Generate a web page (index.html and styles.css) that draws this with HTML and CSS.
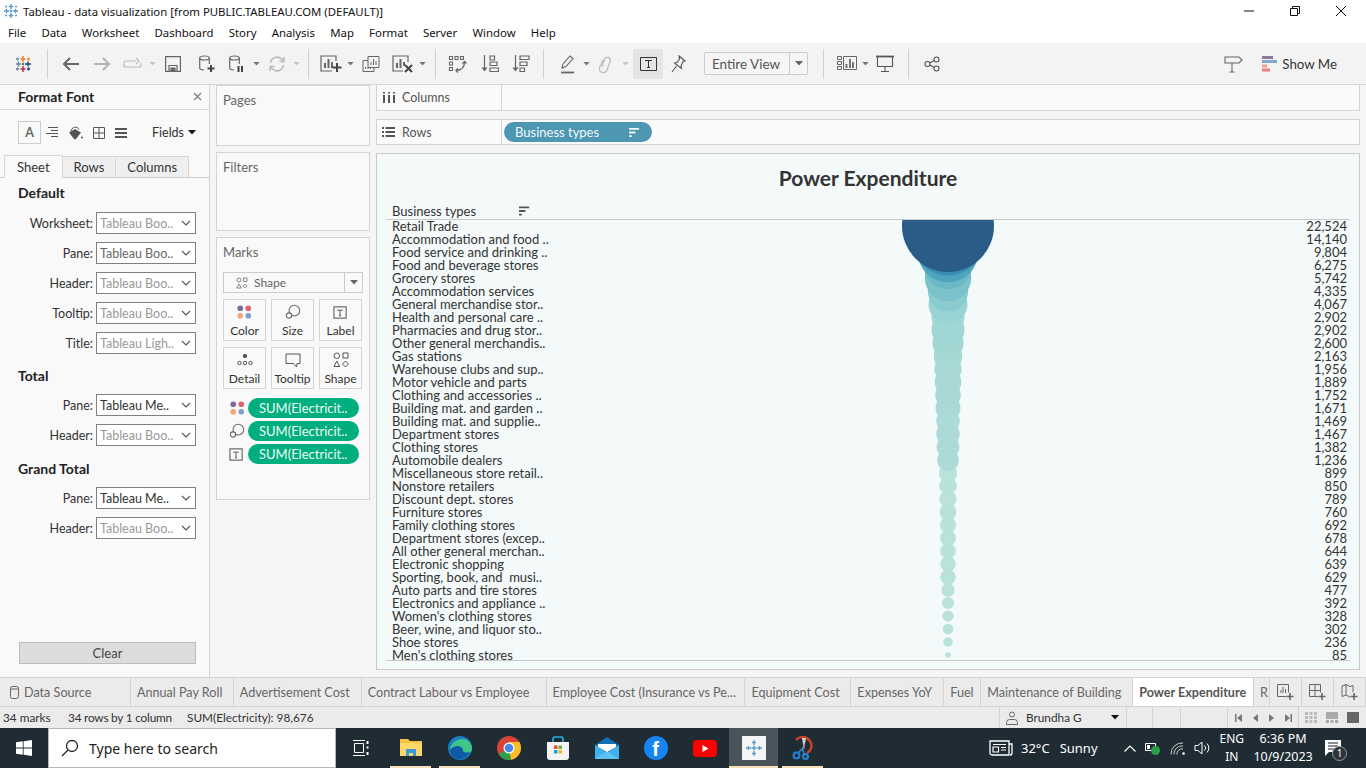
FILE: index.html
```html
<!DOCTYPE html>
<html lang="en">
<head>
  <meta charset="UTF-8">
  <title>Tableau - data visualization</title>
  <link rel="stylesheet" href="styles.css">
</head>
<body>
  <svg class="defs" width="0" height="0">
    <symbol id="palette" viewBox="0 0 18 16">
      <circle cx="4.5" cy="4" r="3" fill="#7b6a96"/><circle cx="13" cy="4" r="3" fill="#e0636f"/>
      <circle cx="4.5" cy="12" r="3" fill="#f2a478"/><circle cx="13" cy="12" r="3" fill="#7d9fcb"/>
    </symbol>
    <symbol id="size" viewBox="0 0 18 18">
      <circle cx="10.5" cy="7.5" r="6" fill="none" stroke="#666" stroke-width="1.2"/>
      <circle cx="4.5" cy="13" r="3" fill="#f9f9f9" stroke="#666" stroke-width="1.2"/>
    </symbol>
    <symbol id="textbox" viewBox="0 0 16 16">
      <rect x="1" y="2" width="13" height="12" fill="none" stroke="#555" stroke-width="1.1"/>
      <path d="M4.5 5.5h6M7.5 5.5v6M6.3 11.5h2.4" fill="none" stroke="#555"/>
    </symbol>
    <symbol id="caret" viewBox="0 0 8 5"><path d="M0 0h8L4 4.5z"/></symbol>
    <symbol id="chev" viewBox="0 0 10 6"><path d="M1 1l4 4 4-4" fill="none" stroke="#555" stroke-width="1.1"/></symbol>
    <symbol id="sortbars" viewBox="0 0 12 10"><path d="M0 0h11v2H0zM0 4h7v2H0zM0 8h3v2H0z"/></symbol>
  </svg>

  <header class="titlebar">
    <svg class="app-icon" width="16" height="16" viewBox="0 0 16 16" stroke="#5c9bc5" stroke-width="1.3">
      <path d="M8 1v5M5.800 3.500h4.400M8 10v5M5.800 12.500h4.400M1 8h5M3.500 5.800v4.400M10 8h5M12.500 5.800v4.400M6.600 8h2.800M8 6.600v2.800"/>
      <path d="M3 2.500v2M2 3.500h2M13 2.500v2M12 3.500h2M3 11.500v2M2 12.500h2M13 11.500v2M12 12.500h2" stroke-width="1"/>
    </svg>
    <span class="title-text">Tableau - data visualization [from PUBLIC.TABLEAU.COM (DEFAULT)]</span>
    <div class="win-controls">
      <svg width="12" height="12" viewBox="0 0 12 12"><path d="M1 6h10" stroke="#111"/></svg>
      <svg width="12" height="12" viewBox="0 0 12 12" fill="none" stroke="#111"><path d="M1.500 3.500h7v7h-7zM3.500 3.500v-2h7v7h-2"/></svg>
      <svg width="12" height="12" viewBox="0 0 12 12"><path d="M1 1l10 10M11 1L1 11" stroke="#111"/></svg>
    </div>
  </header>

  <nav class="menubar">
    <span>File</span><span>Data</span><span>Worksheet</span><span>Dashboard</span><span>Story</span><span>Analysis</span><span>Map</span><span>Format</span><span>Server</span><span>Window</span><span>Help</span>
  </nav>

  <div class="toolbar">
    <span class="t m-logo">
      <svg width="20" height="20" viewBox="0 0 20 20" fill="none" stroke-width="1.4">
        <path d="M10 2v6M7.500 5h5" stroke="#e8762b"/><path d="M10 12v6M7.500 15h5" stroke="#c72037"/>
        <path d="M3 10h5M5.500 7.500v5" stroke="#5b879b"/><path d="M12 10h6M15 7.500v5" stroke="#1f447b"/>
        <path d="M4.500 3.500v3M3 5h3" stroke="#7099a6"/><path d="M15.500 3.500v3M14 5h3" stroke="#eb912b"/>
        <path d="M4.500 13.500v3M3 15h3" stroke="#59879b"/><path d="M15.500 13.500v3M14 15h3" stroke="#1f447b"/>
        <path d="M10 8.800v2.400M8.800 10h2.400" stroke="#666"/>
      </svg>
    </span>
    <i class="sep sep-a"></i>
    <span class="t"><svg width="18" height="16" viewBox="0 0 18 16" fill="none" stroke="#666" stroke-width="2"><path d="M17 8H2M8 2L2 8l6 6"/></svg></span>
    <span class="t"><svg width="18" height="16" viewBox="0 0 18 16" fill="none" stroke="#b5b5b5" stroke-width="2"><path d="M1 8h15M10 2l6 6-6 6"/></svg></span>
    <span class="t"><svg width="20" height="14" viewBox="0 0 20 14" fill="none" stroke="#bbb" stroke-width="1.2"><path d="M13 4H3a2 2 0 0 0-2 2v2a2 2 0 0 0 2 2h13a2 2 0 0 0 2-2V6M13 1l3 3-3 3"/></svg></span>
    <span class="c"><svg width="7" height="4"><use href="#caret" class="dim"/></svg></span>
    <span class="t"><svg width="16" height="16" viewBox="0 0 16 16" fill="none" stroke="#666" stroke-width="1.2"><path d="M.6.6h14.800v14.800H.6z"/><path d="M4 15V9.500h8V15"/><path d="M6 12h4v3H6z" fill="#666"/></svg></span>
    <span class="t m3"><svg width="18" height="18" viewBox="0 0 18 18" fill="none" stroke="#666" stroke-width="1.2"><ellipse cx="6.500" cy="3" rx="4.800" ry="2"/><path d="M1.700 3v10c0 1 1.700 1.800 4.300 2M11.300 3v6"/><path d="M13 10v7M9.500 13.500h7" stroke="#444" stroke-width="2"/></svg></span>
    <span class="t"><svg width="18" height="18" viewBox="0 0 18 18" fill="none" stroke="#666" stroke-width="1.2"><ellipse cx="6.500" cy="3" rx="4.800" ry="2"/><path d="M1.700 3v10c0 1 1.700 1.800 4.300 2M11.300 3v6"/><path d="M10.500 11v6M14 11v6" stroke="#444" stroke-width="2"/></svg></span>
    <span class="c"><svg width="7" height="4"><use href="#caret"/></svg></span>
    <span class="t"><svg width="18" height="18" viewBox="0 0 18 18" fill="none" stroke="#bbb" stroke-width="1.6"><path d="M2.500 8a6.500 6.500 0 0 1 11-4l2 2M15.500 10a6.500 6.500 0 0 1-11 4l-2-2M15.800 2v4.500h-4.500M2.200 16v-4.500h4.500"/></svg></span>
    <span class="c"><svg width="7" height="4"><use href="#caret" class="dim"/></svg></span>
    <i class="sep sep-e"></i>
    <span class="t"><svg width="22" height="18" viewBox="0 0 22 18" fill="none" stroke="#666" stroke-width="1.2"><path d="M16 6V1H1v15h11"/><path d="M5 13V8M8.500 13V4M12 13V7" stroke-width="2"/><path d="M17 8v9M12.500 12.500h9" stroke="#444" stroke-width="2"/></svg></span>
    <span class="c"><svg width="7" height="4"><use href="#caret"/></svg></span>
    <span class="t"><svg width="18" height="18" viewBox="0 0 18 18" fill="none" stroke="#666"><path d="M6 1.500h11v11H6z"/><path d="M9 10V7M11.500 10V4M14 10V6"/><path d="M6 5.500H1v11h11v-4"/><path d="M3.500 14v-2M6 14v-2M8.500 14v-2"/></svg></span>
    <span class="t m2"><svg width="22" height="18" viewBox="0 0 22 18" fill="none" stroke="#666" stroke-width="1.2"><path d="M16 7V1H1v15h10"/><path d="M5 13V8M8.500 13V4M12 11V7" stroke-width="2"/><path d="M13 10l7 7M20 10l-7 7" stroke="#444" stroke-width="2"/></svg></span>
    <span class="c"><svg width="7" height="4"><use href="#caret"/></svg></span>
    <i class="sep"></i>
    <span class="t"><svg width="20" height="20" viewBox="0 0 20 20" fill="none" stroke="#666" stroke-width="1.1"><path d="M1.500 2.500h3v3h-3zM7 2.500h3v3H7zM12.500 2.500h3v3h-3zM1.500 8h3v3h-3zM1.500 13.500h3v3h-3z"/><path d="M16.500 8c0 5-3 8-8 8.500M14.500 9.500l2-2 2 2M10 14.500l-2 2 2 2" stroke-width="1.300"/></svg></span>
    <span class="t m2"><svg width="18" height="20" viewBox="0 0 18 20" fill="none" stroke="#666" stroke-width="1.2"><path d="M3.500 1v15"/><path d="M.5 13.500h6l-3 4z" fill="#666" stroke="none"/><path d="M9 2h4.500v4H9zM9 8h7v3.500H9zM9 14h8.500v3.500H9z"/></svg></span>
    <span class="t"><svg width="18" height="20" viewBox="0 0 18 20" fill="none" stroke="#666" stroke-width="1.2"><path d="M3.500 1v15"/><path d="M.5 13.500h6l-3 4z" fill="#666" stroke="none"/><path d="M8 2h9v3.500H8zM8 8h7v3.500H8zM8 14h4.500v3.500H8z"/></svg></span>
    <i class="sep sep-b"></i>
    <span class="t"><svg width="16" height="20" viewBox="0 0 16 20" fill="none" stroke="#666" stroke-width="1.1"><path d="M2 14l1-4 7-8 3 2.500-7 8z"/><path d="M1 18.500h13" stroke-width="1.800"/></svg></span>
    <span class="c cn"><svg width="7" height="4"><use href="#caret"/></svg></span>
    <span class="t"><svg width="14" height="20" viewBox="0 0 14 20" fill="none" stroke="#bbb" stroke-width="1.2"><path d="M4 14V6a3 3 0 0 1 6 0v9a4 4 0 0 1-8 .500L3 7" transform="rotate(20 7 10)"/></svg></span>
    <span class="c"><svg width="7" height="4"><use href="#caret" class="dim"/></svg></span>
    <span class="t-on"><svg width="17" height="14" viewBox="0 0 17 14" fill="none" stroke="#333"><path d="M.5.500h16v13H.5z"/><path d="M5 3.500h7M8.500 3.500v7M7 10.500h3"/></svg></span>
    <span class="t t-pin"><svg width="15" height="18" viewBox="0 0 15 18" fill="none" stroke="#555" stroke-width="1.1"><path d="M8 1l6 5-2 .500-2 4.500.500 2.500L3.500 8 6 7.500l2.500-3.500z"/><path d="M5.500 11L1 17"/></svg></span>
    <div class="view-select"><span class="view-label">Entire View</span><span class="view-arrow"><svg width="8" height="5"><use href="#caret" class="mid"/></svg></span></div>
    <i class="sep sep-c"></i>
    <span class="t"><svg width="20" height="15" viewBox="0 0 20 15" fill="none" stroke="#666"><path d="M.5.500h4v3h-4zM.5 5.500h4v3h-4zM.5 10.500h4v3h-4zM6.500.500h13v13h-13z"/><path d="M9.500 12V8M13 12V3M16 12V6" stroke-width="1.800"/></svg></span>
    <span class="c cn"><svg width="7" height="4"><use href="#caret"/></svg></span>
    <span class="t"><svg width="18" height="18" viewBox="0 0 18 18" fill="none" stroke="#555" stroke-width="1.1"><path d="M0 1.500h18" stroke-width="1.800"/><path d="M1.500 2v9.500h15V2M9 11.500V16M5 16.500h8"/></svg></span>
    <i class="sep sep-d"></i>
    <span class="t"><svg width="16" height="16" viewBox="0 0 16 16" fill="none" stroke="#555" stroke-width="1.1"><circle cx="3.500" cy="8" r="2.500"/><circle cx="12.500" cy="3.500" r="2.500"/><circle cx="12.500" cy="12.500" r="2.500"/><path d="M5.800 7l4.400-2.400M5.800 9l4.400 2.400"/></svg></span>
    <div class="toolbar-right">
      <svg width="19" height="18" viewBox="0 0 19 18" fill="none" stroke="#666" stroke-width="1.100"><path d="M1 2h14l3 3-3 3H1zM8 8v9M5.500 17h5"/></svg>
      <div class="show-me">
        <svg width="15" height="16" viewBox="0 0 15 16"><path d="M0 0h11v3H0z" fill="#8a7a9d"/><path d="M0 4h15v3H0z" fill="#84a7d0"/><path d="M0 8.500h5v3H0z" fill="#f2a478"/><path d="M0 12.500h8v3H0z" fill="#ee7b85"/></svg>
        <span>Show Me</span>
      </div>
    </div>
  </div>

  <main class="workspace">
    <aside class="format-pane">
      <div class="pane-head">
        <strong>Format Font</strong>
        <svg width="9" height="9" viewBox="0 0 9 9"><path d="M1 1l7 7M8 1L1 8" stroke="#777" stroke-width="1.100"/></svg>
      </div>
      <div class="format-icons">
        <span class="font-box">A</span>
        <svg width="12" height="11" viewBox="0 0 12 11" stroke="#555"><path d="M2 .5h10M5 3.500h7M0 6.500h12M5 9.500h7"/></svg>
        <svg width="15" height="14" viewBox="0 0 15 14"><path d="M1 6.500L7 3l6 3.500-5 6.500a1.500 1.500 0 0 1-2 0z" fill="#555"/><path d="M3 5.500C3 1 9.500-.5 11 3.500" fill="none" stroke="#555"/><circle cx="14" cy="11.500" r="1" fill="#555"/></svg>
        <svg width="12" height="12" viewBox="0 0 12 12" fill="none" stroke="#555"><path d="M.5.500h11v11H.5zM6 .5v11M.5 6h11"/></svg>
        <svg width="12" height="10" viewBox="0 0 12 10" fill="#555"><path d="M0 0h12v2H0zM0 4h12v2H0zM0 8h12v2H0z"/></svg>
        <span class="fields">Fields<svg width="8" height="5"><use href="#caret" class="blk"/></svg></span>
      </div>
      <div class="format-tabs">
        <span class="ftab on">Sheet</span><span class="ftab">Rows</span><span class="ftab">Columns</span>
      </div>
      <h4 class="group-head">Default</h4>
      <div class="field"><label>Worksheet:</label><div class="pick dim-text"><span>Tableau Boo..</span><svg width="10" height="6"><use href="#chev"/></svg></div></div>
      <div class="field"><label>Pane:</label><div class="pick mid-text"><span>Tableau Boo..</span><svg width="10" height="6"><use href="#chev"/></svg></div></div>
      <div class="field"><label>Header:</label><div class="pick dim-text"><span>Tableau Boo..</span><svg width="10" height="6"><use href="#chev"/></svg></div></div>
      <div class="field"><label>Tooltip:</label><div class="pick dim-text"><span>Tableau Boo..</span><svg width="10" height="6"><use href="#chev"/></svg></div></div>
      <div class="field"><label>Title:</label><div class="pick dim-text"><span>Tableau Ligh..</span><svg width="10" height="6"><use href="#chev"/></svg></div></div>
      <h4 class="group-head g2">Total</h4>
      <div class="field"><label>Pane:</label><div class="pick"><span>Tableau Me..</span><svg width="10" height="6"><use href="#chev"/></svg></div></div>
      <div class="field"><label>Header:</label><div class="pick dim-text"><span>Tableau Boo..</span><svg width="10" height="6"><use href="#chev"/></svg></div></div>
      <h4 class="group-head g3">Grand Total</h4>
      <div class="field"><label>Pane:</label><div class="pick"><span>Tableau Me..</span><svg width="10" height="6"><use href="#chev"/></svg></div></div>
      <div class="field"><label>Header:</label><div class="pick dim-text"><span>Tableau Boo..</span><svg width="10" height="6"><use href="#chev"/></svg></div></div>
      <button class="clear-btn">Clear</button>
    </aside>

    <section class="cards">
      <div class="card pages"><span class="card-title">Pages</span></div>
      <div class="card filters"><span class="card-title">Filters</span></div>
      <div class="card marks">
        <span class="card-title">Marks</span>
        <div class="mark-type">
          <span class="mark-name">
            <svg width="12" height="12" viewBox="0 0 12 12" fill="none" stroke="#888"><circle cx="3" cy="3" r="2"/><path d="M7.500 1h3.500v3.500H7.500z"/><path d="M3 7l2.300 4H.7z"/><path d="M9.200 7l2 2-2 2-2-2z"/></svg>
            Shape
          </span>
          <span class="view-arrow"><svg width="8" height="5"><use href="#caret" class="mid"/></svg></span>
        </div>
        <div class="mark-grid">
          <div class="mark-btn"><svg width="17" height="16"><use href="#palette"/></svg>Color</div>
          <div class="mark-btn"><svg width="16" height="16"><use href="#size"/></svg>Size</div>
          <div class="mark-btn"><svg width="15" height="15"><use href="#textbox"/></svg>Label</div>
          <div class="mark-btn"><svg width="16" height="16" viewBox="0 0 16 16" fill="none" stroke="#555"><circle cx="8" cy="4" r="1.700" fill="#555"/><circle cx="2.500" cy="11" r="1.700"/><circle cx="8" cy="11" r="1.700"/><circle cx="13.500" cy="11" r="1.700"/></svg>Detail</div>
          <div class="mark-btn"><svg width="16" height="16" viewBox="0 0 16 16" fill="none" stroke="#555"><path d="M1 2h14v9.500h-3l-.5 3.500L8.500 11.500H1z"/></svg>Tooltip</div>
          <div class="mark-btn"><svg width="16" height="16" viewBox="0 0 16 16" fill="none" stroke="#555"><circle cx="3.800" cy="3.800" r="2.800"/><path d="M10 1h5v5h-5z"/><path d="M3.800 9l2.800 5.500H1z"/><path d="M12.500 9l3 3-3 3-3-3z"/></svg>Shape</div>
        </div>
        <div class="mark-pill"><svg width="17" height="16"><use href="#palette"/></svg><span class="pill">SUM(Electricit..</span></div>
        <div class="mark-pill"><svg width="16" height="16"><use href="#size"/></svg><span class="pill">SUM(Electricit..</span></div>
        <div class="mark-pill"><svg width="15" height="15"><use href="#textbox"/></svg><span class="pill">SUM(Electricit..</span></div>
      </div>
    </section>

    <section class="sheet">
      <div class="shelf columns">
        <div class="shelf-label">
          <svg width="13" height="11" viewBox="0 0 13 11" fill="#555"><path d="M1 3h2v8H1zM6 3h2v8H6zM11 3h2v8h-2zM1 0h2v1.500H1zM6 0h2v1.500H6zM11 0h2v1.500h-2z"/></svg>
          Columns
        </div>
      </div>
      <div class="shelf rows">
        <div class="shelf-label">
          <svg width="13" height="10" viewBox="0 0 13 10" fill="#555"><path d="M0 0h2v2H0zM3.500 0H13v2H3.500zM0 4h2v2H0zM3.500 4H13v2H3.500zM0 8h2v2H0zM3.500 8H13v2H3.500z"/></svg>
          Rows
        </div>
        <div class="row-pill"><span>Business types</span><svg class="pill-sort" width="11" height="9"><use href="#sortbars"/></svg></div>
      </div>
      <div class="view">
        <h1 class="view-title">Power Expenditure</h1>
        <div class="view-head">
          <span class="head-label">Business types</span>
          <svg class="head-sort" width="11" height="10"><use href="#sortbars"/></svg>
        </div>
        <div class="table">
          <svg class="bubbles" width="964" height="440">
            <circle cx="562" cy="435" r="2.800" fill="#b8e2da"/>
            <circle cx="562" cy="422" r="4.700" fill="#b8e2da"/>
            <circle cx="562" cy="409" r="5.300" fill="#b8e2da"/>
            <circle cx="562" cy="396" r="5.600" fill="#b8e2da"/>
            <circle cx="562" cy="383" r="6.100" fill="#b8e2da"/>
            <circle cx="562" cy="370" r="6.700" fill="#b8e2da"/>
            <circle cx="562" cy="357" r="7.700" fill="#b8e2da"/>
            <circle cx="562" cy="344" r="7.700" fill="#b8e2da"/>
            <circle cx="562" cy="331" r="7.800" fill="#b8e2da"/>
            <circle cx="562" cy="318" r="8" fill="#b8e2da"/>
            <circle cx="562" cy="305" r="8.100" fill="#b8e2da"/>
            <circle cx="562" cy="292" r="8.400" fill="#b8e2da"/>
            <circle cx="562" cy="279" r="8.600" fill="#b8e2da"/>
            <circle cx="562" cy="266" r="8.900" fill="#b8e2da"/>
            <circle cx="562" cy="253" r="9.200" fill="#b8e2da"/>
            <circle cx="562" cy="240" r="10.800" fill="#acdbd7"/>
            <circle cx="562" cy="227" r="11.400" fill="#acdbd7"/>
            <circle cx="562" cy="214" r="11.700" fill="#acdbd7"/>
            <circle cx="562" cy="201" r="11.700" fill="#acdbd7"/>
            <circle cx="562" cy="188" r="12.500" fill="#aadad6"/>
            <circle cx="562" cy="175" r="12.800" fill="#aadad6"/>
            <circle cx="562" cy="162" r="13.300" fill="#a8d9d5"/>
            <circle cx="562" cy="149" r="13.600" fill="#a8d9d5"/>
            <circle cx="562" cy="136" r="14.300" fill="#a6d8d5"/>
            <circle cx="562" cy="123" r="15.600" fill="#a3d7d4"/>
            <circle cx="562" cy="110" r="16.500" fill="#a0d6d4"/>
            <circle cx="562" cy="97" r="16.500" fill="#a0d6d4"/>
            <circle cx="562" cy="84" r="19.500" fill="#98d3d3"/>
            <circle cx="562" cy="71" r="20.200" fill="#8acbcf"/>
            <circle cx="562" cy="58" r="23.200" fill="#7cc2cb"/>
            <circle cx="562" cy="45" r="24.300" fill="#6cb8c6"/>
            <circle cx="562" cy="32" r="30.300" fill="#4fa4bd"/>
            <circle cx="562" cy="19" r="36.400" fill="#3a8db0"/>
            <circle cx="562" cy="6" r="46" fill="#2b5b87"/>
          </svg>
          <div class="row"><span>Retail Trade</span><span>22,524</span></div>
          <div class="row"><span>Accommodation and food ..</span><span>14,140</span></div>
          <div class="row"><span>Food service and drinking ..</span><span>9,804</span></div>
          <div class="row"><span>Food and beverage stores</span><span>6,275</span></div>
          <div class="row"><span>Grocery stores</span><span>5,742</span></div>
          <div class="row"><span>Accommodation services</span><span>4,335</span></div>
          <div class="row"><span>General merchandise stor..</span><span>4,067</span></div>
          <div class="row"><span>Health and personal care ..</span><span>2,902</span></div>
          <div class="row"><span>Pharmacies and drug stor..</span><span>2,902</span></div>
          <div class="row"><span>Other general merchandis..</span><span>2,600</span></div>
          <div class="row"><span>Gas stations</span><span>2,163</span></div>
          <div class="row"><span>Warehouse clubs and sup..</span><span>1,956</span></div>
          <div class="row"><span>Motor vehicle and parts</span><span>1,889</span></div>
          <div class="row"><span>Clothing and accessories ..</span><span>1,752</span></div>
          <div class="row"><span>Building mat. and garden ..</span><span>1,671</span></div>
          <div class="row"><span>Building mat. and supplie..</span><span>1,469</span></div>
          <div class="row"><span>Department stores</span><span>1,467</span></div>
          <div class="row"><span>Clothing stores</span><span>1,382</span></div>
          <div class="row"><span>Automobile dealers</span><span>1,236</span></div>
          <div class="row"><span>Miscellaneous store retail..</span><span>899</span></div>
          <div class="row"><span>Nonstore retailers</span><span>850</span></div>
          <div class="row"><span>Discount dept. stores</span><span>789</span></div>
          <div class="row"><span>Furniture stores</span><span>760</span></div>
          <div class="row"><span>Family clothing stores</span><span>692</span></div>
          <div class="row"><span>Department stores (excep..</span><span>678</span></div>
          <div class="row"><span>All other general merchan..</span><span>644</span></div>
          <div class="row"><span>Electronic shopping</span><span>639</span></div>
          <div class="row"><span>Sporting, book, and  musi..</span><span>629</span></div>
          <div class="row"><span>Auto parts and tire stores</span><span>477</span></div>
          <div class="row"><span>Electronics and appliance ..</span><span>392</span></div>
          <div class="row"><span>Women's clothing stores</span><span>328</span></div>
          <div class="row"><span>Beer, wine, and liquor sto..</span><span>302</span></div>
          <div class="row"><span>Shoe stores</span><span>236</span></div>
          <div class="row"><span>Men's clothing stores</span><span>85</span></div>
        </div>
      </div>
    </section>
  </main>

  <div class="tabbar">
    <span class="tab tab-source"><svg width="9" height="13" viewBox="0 0 9 13" fill="none" stroke="#666"><rect x=".5" y=".5" width="8" height="12" rx="2"/><path d="M.5 3h8"/></svg>Data Source</span>
    <span class="tab w103">Annual Pay Roll</span>
    <span class="tab w128">Advertisement Cost</span>
    <span class="tab w185">Contract Labour vs Employee</span>
    <span class="tab w199">Employee Cost (Insurance vs Pe...</span>
    <span class="tab w106">Equipment Cost</span>
    <span class="tab w93">Expenses YoY</span>
    <span class="tab w37">Fuel</span>
    <span class="tab w152">Maintenance of Building</span>
    <span class="tab tab-on">Power Expenditure</span>
    <span class="tab w16">R</span>
    <span class="tab-add"><svg width="18" height="17" viewBox="0 0 18 17" fill="none" stroke="#666"><path d="M9 12.500H.5V.5h11v8"/><path d="M4 9V6M6 9V3M8.500 9V5"/><path d="M13 9v7M9.500 12.500h7" stroke-width="1.600"/></svg></span>
    <span class="tab-add"><svg width="18" height="17" viewBox="0 0 18 17" fill="none" stroke="#666"><path d="M9 12.500H.5V.5h11v8M6 .5v12M.5 6.500h11"/><path d="M13 9v7M9.500 12.500h7" stroke-width="1.600"/></svg></span>
    <span class="tab-add"><svg width="18" height="17" viewBox="0 0 18 17" fill="none" stroke="#666"><path d="M9 13l-4-2-4 1.500V2l4-1.500 4 2 3-1V8M5 .5V11"/><path d="M13 9v7M9.500 12.500h7" stroke-width="1.600"/></svg></span>
  </div>

  <footer class="statusbar">
    <span class="st-marks">34 marks</span>
    <span class="st-rows">34 rows by 1 column</span>
    <span>SUM(Electricity): 98,676</span>
    <div class="st-right">
      <div class="st-user">
        <svg width="12" height="14" viewBox="0 0 12 14" fill="none" stroke="#666"><circle cx="6" cy="3.500" r="2.500"/><path d="M.5 13.500v-2a3 3 0 0 1 3-3h5a3 3 0 0 1 3 3v2z"/></svg>
        <span class="user-name">Brundha G</span>
        <svg width="8" height="5"><use href="#caret" class="blk"/></svg>
      </div>
      <span class="st-cell w26"></span>
      <span class="st-cell w28"></span>
      <span class="st-cell w47"></span>
      <div class="st-nav">
        <svg width="7" height="8" viewBox="0 0 7 8" fill="#777"><path d="M0 0h1.500v8H0zM7 0v8L2 4z"/></svg>
        <svg width="5" height="8" viewBox="0 0 5 8" fill="#777"><path d="M5 0v8L0 4z"/></svg>
        <svg width="5" height="8" viewBox="0 0 5 8" fill="#777"><path d="M0 0v8l5-4z"/></svg>
        <svg width="7" height="8" viewBox="0 0 7 8" fill="#777"><path d="M0 0v8l5-4zM5.500 0H7v8H5.500z"/></svg>
      </div>
      <div class="st-views">
        <svg width="12" height="11" viewBox="0 0 12 11" fill="#bbb"><path d="M0 0h3v3H0zM4.500 0h3v3h-3zM9 0h3v3H9zM0 4h3v3H0zM4.500 4h3v3h-3zM9 4h3v3H9zM0 8h3v3H0zM4.500 8h3v3h-3zM9 8h3v3H9z"/></svg>
        <svg width="12" height="11" viewBox="0 0 12 11" fill="#aaa"><path d="M0 0h12v7H0zM0 8h3v3H0zM4.500 8h3v3h-3zM9 8h3v3H9z"/></svg>
        <svg width="12" height="11" viewBox="0 0 12 11" fill="#666"><path d="M0 0h12v11H0z"/></svg>
      </div>
    </div>
  </footer>

  <div class="taskbar">
    <span class="start"><svg width="16" height="16" viewBox="0 0 16 16" fill="#fff"><path d="M0 2.300l6.800-1v6.300H0zM7.600 1.200L16 0v7.600H7.600zM0 8.400h6.800v6.300l-6.800-1zM7.600 8.400H16V16l-8.400-1.200z"/></svg></span>
    <div class="searchbox">
      <svg width="18" height="18" viewBox="0 0 18 18" fill="none" stroke="#222" stroke-width="1.300"><circle cx="11" cy="7" r="5.500"/><path d="M7 11l-6 6"/></svg>
      <span>Type here to search</span>
    </div>
    <span class="task first"><svg width="16" height="16" viewBox="0 0 16 16" fill="none" stroke="#fff"><path d="M0 .5h12M0 15.500h12M1.500 3.500h9v9h-9z"/><path d="M14.500 1v3M14.500 6.500v2M14.500 12v3" stroke-width="2"/></svg></span>
    <span class="task run"><svg width="22" height="20" viewBox="0 0 22 20"><path d="M0 1h8l2 2h12v15H0z" fill="#f5c242"/><path d="M0 5h22v13H0z" fill="#fbd968"/><path d="M6 11h10v7h-3v-3H9v3H6z" fill="#3a9bd8"/></svg></span>
    <span class="task run"><svg width="24" height="24" viewBox="0 0 24 24"><circle cx="12" cy="12" r="12" fill="#1a7fc4"/><path d="M2 14C3 5 12 1 19 4c3 2 5 5 5 9 0 3-3 4-6 4-4 0-3-2-3-3 0-3-7-5-13 0z" fill="#3fc78a"/><path d="M2 14c3-4 8-5 11-3 2 1 1 3 2 4 1 2 5 2 7 1-3 6-9 8-14 7-3-1-6-5-6-9z" fill="#0f5aa6"/></svg></span>
    <span class="task"><svg width="24" height="24" viewBox="0 0 24 24"><circle cx="12" cy="12" r="12" fill="#d8433a"/><path d="M12 12L1.600 18A12 12 0 0 0 14 23.800z" fill="#2f9e4a"/><path d="M12 6h10.400A12 12 0 0 1 14 23.800L12 12z" fill="#f6c026"/><circle cx="12" cy="12" r="5.500" fill="#fff"/><circle cx="12" cy="12" r="4.300" fill="#4a86e8"/></svg></span>
    <span class="task"><svg width="24" height="24" viewBox="0 0 24 24"><path d="M7 7V3a2 2 0 0 1 2-2h6a2 2 0 0 1 2 2v4" fill="none" stroke="#2ab0e4" stroke-width="1.600"/><path d="M1 6h22v15a3 3 0 0 1-3 3H4a3 3 0 0 1-3-3z" fill="#f3f3f3"/><path d="M8 9.500h3.500V13H8z" fill="#e8502f"/><path d="M12.500 9.500H16V13h-3.500z" fill="#6cb33f"/><path d="M8 14h3.500v3.500H8z" fill="#1f9fe0"/><path d="M12.500 14H16v3.500h-3.500z" fill="#f7b916"/></svg></span>
    <span class="task"><svg width="24" height="22" viewBox="0 0 24 22"><path d="M0 8l12-8 12 8v14H0z" fill="#1170b8"/><path d="M0 8l12 8 12-8v14H0z" fill="#3db2ec"/><path d="M0 22l12-8 12 8z" fill="#5cc3f2"/><path d="M3 7h18v3l-9 5-9-5z" fill="#fff"/></svg></span>
    <span class="task"><span class="fb">f</span></span>
    <span class="task"><svg width="24" height="17" viewBox="0 0 24 17"><rect width="24" height="17" rx="4" fill="#f00"/><path d="M9.500 5v7l6-3.500z" fill="#fff"/></svg></span>
    <span class="task run active"><span class="tile"><svg width="18" height="18" viewBox="0 0 18 18" stroke="#5c9bc5" stroke-width="1.300"><path d="M9 1v5M7 3.500h4M9 12v5M7 14.500h4M1 9h5M3.500 7v4M12 9h5M14.500 7v4M6.500 9h5M9 6.500v5"/></svg></span></span>
    <span class="task run"><svg width="24" height="24" viewBox="0 0 24 24" fill="none"><path d="M5 4a9 9 0 0 1 14 1c3 5 1 10-3 12" stroke="#c8412a" stroke-width="2.500"/><path d="M11 2l4 0-2 12z" fill="#cfcfcf"/><path d="M15 4l-5 10 1.500 2z" fill="#888"/><circle cx="5.500" cy="19.500" r="3" stroke="#1f86d9" stroke-width="2"/><circle cx="14.500" cy="20.500" r="2.500" stroke="#1f86d9" stroke-width="2"/><path d="M7 17l4-4M13 18l-1-4" stroke="#1f86d9" stroke-width="1.600"/></svg></span>
    <div class="tray">
      <svg class="news" width="24" height="16" viewBox="0 0 24 16" fill="none" stroke="#fff" stroke-width="1.300"><path d="M1 1h19v14H3a2 2 0 0 1-2-2zM20 4h3v9a2 2 0 0 1-2 2"/><path d="M4 4.500h13M4 7h5.500v5H4zM12 7.500h5M12 10h5" stroke-width="1.200"/></svg>
      <span class="temp">32°C</span>
      <span class="sky">Sunny</span>
      <svg class="chev-up" width="12" height="7" viewBox="0 0 12 7" fill="none" stroke="#fff" stroke-width="1.200"><path d="M.5 6.500L6 1l5.500 5.500"/></svg>
      <svg class="batt" width="15" height="14" viewBox="0 0 15 14"><path d="M.5 2.500h10v7H.5z" fill="none" stroke="#fff"/><path d="M2 4h3v4H2z" fill="#fff"/><circle cx="10.500" cy="9.500" r="4.500" fill="#2d9f48"/></svg>
      <svg class="wifi" width="16" height="13" viewBox="0 0 16 13" fill="none" stroke="#ccc"><path d="M1 12.500A11 11 0 0 1 13 1M4 12.500A8 8 0 0 1 13 4M7 12.500A5 5 0 0 1 13 7"/><circle cx="13.500" cy="11.500" r="1.300" fill="#fff" stroke="none"/></svg>
      <svg class="vol" width="17" height="14" viewBox="0 0 17 14" fill="none" stroke="#fff"><path d="M1 4.500h3L8 1v12L4 9.500H1z"/><path d="M10.500 4.500a3.500 3.500 0 0 1 0 5M13 2.500a6.500 6.500 0 0 1 0 9"/></svg>
      <div class="lang"><span>ENG</span><span>IN</span></div>
      <div class="clock"><span>6:36 PM</span><span>10/9/2023</span></div>
      <div class="notify">
        <svg width="16" height="16" viewBox="0 0 16 16"><path d="M0 0h16v12H4l-4 4z" fill="#fff"/><path d="M3 3h10M3 6h10M3 9h7" stroke="#222"/></svg>
        <span class="badge">1</span>
      </div>
    </div>
  </div>
</body>
</html>
```

FILE: styles.css
```css
* {
  box-sizing: border-box;
}
html, body {
  margin: 0;
  height: 768px;
  overflow: hidden;
}
body {
  width: 1366px;
  display: flex;
  flex-direction: column;
  font-family: "Lato", sans-serif;
  font-size: 13px;
  color: #333;
  background: #fff;
}
.defs {
  position: absolute;
}
svg {
  flex: none;
  display: block;
}
use {
  fill: #777;
}
use.dim {
  fill: #c4c4c4;
}
use.mid {
  fill: #666;
}
use.blk {
  fill: #111;
}

/* window chrome */
.titlebar {
  height: 22px;
  display: flex;
  align-items: center;
  padding-left: 3px;
  font-family: "Noto Sans", sans-serif;
  font-size: 11.4px;
  color: #111;
}
.app-icon {
  margin-right: 4px;
}
.win-controls {
  margin-left: auto;
  display: flex;
  gap: 34px;
  padding-right: 19px;
}
.menubar {
  height: 21px;
  display: flex;
  align-items: center;
  padding-left: 8px;
  font-family: "Noto Sans", sans-serif;
  font-size: 11.4px;
  color: #111;
}
.menubar span {
  margin-right: 15.2px;
}

/* toolbar */
.toolbar {
  height: 42px;
  display: flex;
  align-items: center;
  padding-left: 8px;
  background: #f3f3f3;
  border-bottom: 1px solid #d6d6d6;
}
.t, .t-on {
  width: 31px;
  height: 30px;
  display: flex;
  align-items: center;
  justify-content: center;
}
.t-on {
  width: 30px;
  margin-left: 3px;
  background: #e4e4e4;
}
.t-pin {
  margin-right: 10px;
}
.c {
  width: 9px;
  display: flex;
  justify-content: center;
}
.cn {
  margin: 0 -1px;
}
.m2 {
  margin-left: 1px;
}
.m3 {
  margin: 0 -1px 0 3px;
}
.m-logo {
  width: 30px;
}
.sep {
  width: 1px;
  height: 30px;
  margin: 0 6px 0 8px;
  background: #d0d0d0;
}
.sep-a {
  margin: 0 7px 0 9px;
}
.sep-b {
  margin: 0 8px 0 7px;
}
.sep-c {
  margin: 0 7px 0 15px;
}
.sep-d {
  margin: 0 7px 0 8px;
}
.sep-e {
  margin: 0 6px 0 7px;
}
.view-select {
  width: 104px;
  height: 23px;
  display: flex;
  align-items: center;
  background: #f5f5f5;
  border: 1px solid #ccc;
  border-radius: 2px;
  color: #555;
  font-size: 13.5px;
}
.view-label {
  flex: 1;
  padding-left: 7px;
}
.view-arrow {
  width: 18px;
  height: 100%;
  display: flex;
  align-items: center;
  justify-content: center;
  border-left: 1px solid #ccc;
}
.toolbar-right {
  margin-left: auto;
  display: flex;
  align-items: center;
  gap: 19px;
  padding-right: 29px;
}
.show-me {
  display: flex;
  align-items: center;
  gap: 5px;
  font-size: 13.3px;
  color: #333;
}

/* workspace */
.workspace {
  flex: 1;
  min-height: 0;
  display: flex;
  background: #f5f5f5;
}
.format-pane {
  width: 210px;
  flex: none;
  display: flex;
  flex-direction: column;
  background: #f9f9f9;
  border-right: 1px solid #d4d4d4;
  font-size: 12.5px;
}
.pane-head {
  height: 25px;
  display: flex;
  align-items: center;
  justify-content: space-between;
  padding: 0 7px 2px 18px;
  border-bottom: 1px solid #d9d9d9;
  font-size: 14px;
  color: #222;
}
.format-icons {
  height: 45px;
  display: flex;
  align-items: center;
  padding-left: 18px;
  gap: 10px;
}
.font-box {
  width: 23px;
  height: 23px;
  flex: none;
  margin-right: -5px;
  display: flex;
  align-items: center;
  justify-content: center;
  border: 1px solid #ccc;
  color: #666;
  font-weight: 700;
}
.fields {
  margin-left: 15px;
  display: flex;
  align-items: center;
  gap: 4px;
}
.format-tabs {
  height: 23px;
  display: flex;
  align-items: flex-end;
  padding-left: 4px;
  border-bottom: 1px solid #ccc;
  font-size: 13px;
}
.ftab {
  height: 21px;
  padding: 0 11px;
  display: flex;
  align-items: center;
  background: #efefef;
  border: 1px solid #d6d6d6;
  border-bottom: 0;
  border-left: 0;
}
.ftab.on {
  height: 23px;
  margin-bottom: -1px;
  background: #f9f9f9;
  border-left: 1px solid #d6d6d6;
  padding: 0 12px;
}
.group-head {
  margin: 6px 0 11px 18px;
  font-size: 14px;
  line-height: 17px;
  color: #222;
}
.group-head.g2 {
  margin: 5px 0 10px 18px;
}
.group-head.g3 {
  margin: 6px 0 10px 18px;
}
.field {
  height: 22px;
  margin-bottom: 8px;
  display: flex;
  align-items: center;
  justify-content: flex-end;
  padding-right: 13px;
}
.field label {
  margin-right: 3px;
}
.pick {
  width: 100px;
  height: 22px;
  display: flex;
  align-items: center;
  justify-content: space-between;
  padding: 0 4px 0 3px;
  background: #fff;
  border: 1px solid #808080;
  color: #333;
  white-space: nowrap;
}
.dim-text {
  color: #999;
}
.mid-text {
  color: #666;
}
.clear-btn {
  margin: auto 13px 13px 19px;
  height: 22px;
  background: #dcdcdc;
  border: 1px solid #bdbdbd;
  font-family: inherit;
  font-size: 13px;
  color: #444;
}

/* pages, filters, marks */
.cards {
  width: 154px;
  flex: none;
  margin-left: 6px;
  display: flex;
  flex-direction: column;
  gap: 6px;
}
.card {
  padding: 7px 6px;
  background: #f9f9f9;
  border: 1px solid #d4d4d4;
}
.card-title {
  display: block;
  line-height: 15px;
  color: #666;
}
.pages {
  height: 61px;
}
.filters {
  height: 79px;
}
.marks {
  height: 263px;
}
.mark-type {
  height: 21px;
  margin-top: 12px;
  display: flex;
  align-items: center;
  justify-content: space-between;
  border: 1px solid #ccc;
  color: #666;
  font-size: 12px;
}
.mark-name {
  display: flex;
  align-items: center;
  gap: 6px;
  padding-left: 12px;
}
.mark-grid {
  margin-top: 6px;
  display: grid;
  grid-template-columns: repeat(3, 43px);
  grid-auto-rows: 42px;
  gap: 6px 5px;
}
.mark-btn {
  display: flex;
  flex-direction: column;
  align-items: center;
  justify-content: flex-end;
  gap: 3px;
  padding-bottom: 2px;
  border: 1px solid #d4d4d4;
  font-size: 12px;
}
.mark-pill {
  height: 20px;
  margin-top: 3px;
  display: flex;
  align-items: center;
  justify-content: space-between;
  padding-left: 6px;
}
.mark-grid + .mark-pill {
  margin-top: 9px;
}
.pill {
  width: 111px;
  height: 20px;
  margin-right: 4px;
  padding-left: 11px;
  border-radius: 10px;
  background: #00ae7f;
  color: #eefaf5;
  line-height: 20px;
  white-space: nowrap;
}

/* shelves and view */
.sheet {
  width: 984px;
  flex: none;
  margin-left: 6px;
  display: flex;
  flex-direction: column;
}
.shelf {
  height: 26px;
  display: flex;
  align-items: center;
  background: #fafafa;
  border-bottom: 1px solid #d4d4d4;
  border-left: 1px solid #d4d4d4;
  border-right: 1px solid #d4d4d4;
}
.shelf.rows {
  margin-top: 8px;
  border-top: 1px solid #d4d4d4;
}
.shelf-label {
  width: 125px;
  height: 100%;
  display: flex;
  align-items: center;
  gap: 7px;
  padding-left: 5px;
  border-right: 1px solid #d4d4d4;
  color: #555;
  font-size: 12.5px;
}
.row-pill {
  width: 148px;
  height: 20px;
  margin-left: 2px;
  display: flex;
  align-items: center;
  justify-content: space-between;
  padding: 0 12px 0 11px;
  border-radius: 10px;
  background: #4e97b3;
  color: #f2f9fb;
}
.pill-sort use {
  fill: #f4f9fb;
}
.view {
  height: 517px;
  margin-top: 8px;
  padding: 0 9px;
  background: #f4fafa;
  border: 1px solid #c9c9c9;
}
.view-title {
  height: 48px;
  margin: 0;
  font-size: 21px;
  font-weight: 700;
  line-height: 48px;
  text-align: center;
  color: #333;
}
.view-head {
  height: 18px;
  display: flex;
  align-items: center;
  padding-left: 6px;
  border-bottom: 1px solid #c9c9c9;
}
.head-label {
  width: 127px;
}
.head-sort use {
  fill: #555;
}
.table {
  position: relative;
  height: 441px;
  border-bottom: 1px solid #c9c9c9;
}
.bubbles {
  position: absolute;
  top: 0;
  left: 0;
}
.row {
  position: relative;
  height: 13px;
  display: flex;
  justify-content: space-between;
  padding: 0 3px 0 6px;
  line-height: 13px;
  white-space: pre;
}

/* tabs */
.tabbar {
  height: 30px;
  display: flex;
  background: #ebebeb;
  border-top: 1px solid #d4d4d4;
  border-bottom: 1px solid #d4d4d4;
  color: #666;
  font-size: 12.6px;
}
.tab {
  display: flex;
  align-items: center;
  padding-left: 6px;
  border-right: 1px solid #d4d4d4;
  white-space: nowrap;
  overflow: hidden;
}
.tab-source {
  width: 131px;
  padding-left: 10px;
  gap: 5px;
}
.w103 { width: 103px; }
.w128 { width: 128px; }
.w185 { width: 185px; }
.w199 { width: 199px; }
.w106 { width: 106px; }
.w93 { width: 93px; }
.w37 { width: 37px; }
.w152 { width: 152px; }
.w16 { width: 16px; padding-left: 6px; }
.tab-on {
  width: 121px;
  background: #fff;
  font-weight: 700;
  color: #555;
}
.tab-add {
  width: 32px;
  display: flex;
  align-items: center;
  justify-content: center;
  border-right: 1px solid #d4d4d4;
}

/* status */
.statusbar {
  height: 21px;
  display: flex;
  align-items: center;
  padding-left: 3px;
  background: #ebebeb;
  font-size: 11.8px;
}
.st-marks {
  width: 65px;
}
.st-rows {
  width: 119px;
  letter-spacing: -.2px;
}
.st-right {
  height: 100%;
  margin-left: auto;
  display: flex;
}
.st-user {
  width: 128px;
  display: flex;
  align-items: center;
  padding-left: 6px;
  border-left: 1px solid #d4d4d4;
  border-right: 1px solid #d4d4d4;
}
.user-name {
  width: 93px;
  padding-left: 8px;
}
.st-cell {
  border-right: 1px solid #d4d4d4;
}
.w26 { width: 26px; }
.w28 { width: 28px; }
.w47 { width: 47px; }
.st-nav {
  width: 71px;
  display: flex;
  align-items: center;
  justify-content: center;
  gap: 11px;
  border-right: 1px solid #d4d4d4;
}
.st-views {
  width: 67px;
  display: flex;
  align-items: center;
  justify-content: flex-end;
  gap: 9px;
  padding-right: 7px;
}

/* windows taskbar */
.taskbar {
  height: 40px;
  flex: none;
  display: flex;
  align-items: center;
  background: #1f2c33;
  font-family: "Noto Sans", sans-serif;
  color: #fff;
}
.start {
  width: 48px;
  display: flex;
  justify-content: center;
}
.searchbox {
  width: 288px;
  height: 40px;
  display: flex;
  align-items: center;
  gap: 10px;
  padding-left: 12px;
  background: #fff;
  border: 1px solid #b5b5b5;
  color: #222;
  font-size: 14px;
}
.task {
  position: relative;
  width: 49px;
  height: 40px;
  display: flex;
  align-items: center;
  justify-content: center;
}
.task.first + .task {
  margin-left: 1px;
}
.task.run::after {
  content: "";
  position: absolute;
  left: 4px;
  right: 4px;
  bottom: 0;
  height: 2px;
  background: #f9dfb7;
}
.task.active {
  background: #4a555b;
}
.task.active::after {
  left: 0;
  right: 0;
}
.tile {
  width: 24px;
  height: 24px;
  display: flex;
  align-items: center;
  justify-content: center;
  background: #f3f5f6;
}
.fb {
  width: 24px;
  height: 24px;
  border-radius: 50%;
  background: #1685f0;
  font-family: "Liberation Sans", sans-serif;
  font-size: 20px;
  font-weight: 700;
  line-height: 26px;
  text-align: center;
}
.tray {
  flex: 1;
  display: flex;
  align-items: center;
  padding-left: 162px;
  font-size: 13px;
}
.temp {
  margin-left: 8px;
}
.sky {
  margin-left: 10px;
}
.chev-up {
  margin-left: 26px;
}
.batt {
  margin-left: 9px;
}
.wifi {
  margin-left: 10px;
}
.vol {
  margin-left: 8px;
}
.lang {
  margin-left: 9px;
  display: flex;
  flex-direction: column;
  align-items: center;
  font-size: 12px;
  line-height: 18px;
}
.clock {
  width: 72px;
  margin-left: 3px;
  display: flex;
  flex-direction: column;
  align-items: center;
  font-size: 12.5px;
  line-height: 18px;
}
.notify {
  position: relative;
  margin-left: 6px;
}
.badge {
  position: absolute;
  left: 7px;
  top: 6px;
  width: 15px;
  height: 15px;
  border-radius: 50%;
  background: #2a343a;
  border: 1px solid #999;
  font-size: 10px;
  line-height: 13px;
  text-align: center;
}
```
